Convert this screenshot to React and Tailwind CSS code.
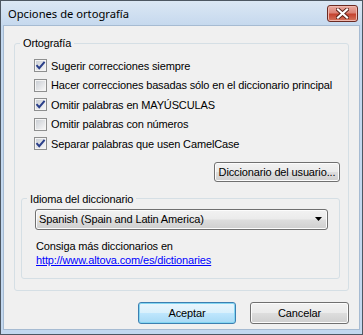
import React from "react";

const FONT = { fontFamily: '"Liberation Sans", Arial, sans-serif' };

function Check({ checked }) {
  return (
    <span className="relative flex h-[13px] w-[13px] shrink-0 items-center justify-center border border-[#8e8f8f] bg-[#f4f4f4]">
      <span className="block h-[9px] w-[9px] bg-gradient-to-br from-[#cbcfd5] to-[#f6f6f6]" />
      {checked && (
        <svg className="absolute left-0 top-0" width="11" height="11" viewBox="0 0 11 11">
          <path d="M1.5 5.2 L4.2 8.2 L9.6 1.8" fill="none" stroke="#2a3f8a" strokeWidth="2" strokeLinejoin="miter" />
        </svg>
      )}
    </span>
  );
}

function Row({ checked, children }) {
  return (
    <div className="flex h-[19.5px] items-center gap-[4px]">
      <Check checked={checked} />
      <span>{children}</span>
    </div>
  );
}

function VButton({ children, primary, className = "" }) {
  return (
    <div
      className={
        "flex items-center justify-center rounded-[3px] border " +
        (primary
          ? "border-[#3c7fb1] bg-[linear-gradient(#eaf6fd_0%,#d9f0fc_48%,#bee6fd_52%,#a7d9f5_100%)] shadow-[inset_0_0_0_1px_#84d6f2]"
          : "border-[#707070] bg-[linear-gradient(#f2f2f2_0%,#ebebeb_48%,#dddddd_52%,#cfcfcf_100%)] shadow-[inset_0_0_0_1px_#fcfcfc]") +
        " " +
        className
      }
    >
      {children}
    </div>
  );
}

export default function App() {
  return (
    <div className="h-[335px] w-[363px] text-[11px] leading-[14px] tracking-[-0.14px] text-black" style={FONT}>
      <div className="flex h-full w-full flex-col border border-[#4d5762] bg-[#c3d8ef]">
        <div className="flex h-[24px] shrink-0 items-center justify-between bg-[linear-gradient(#dbe7f4,#c6d9ee)] pl-[7px] pr-[4px]">
          <span className="mt-[2px] text-[11.2px] tracking-normal text-black" style={{ fontFamily: '"Noto Sans", "Open Sans", sans-serif' }}>
            Opciones de ortografía
          </span>
          <div className="mt-[1px] flex h-[17px] w-[31px] items-center justify-center rounded-[3px] border border-[#6b2a22] bg-[linear-gradient(#e9aaa0_0%,#dc8376_45%,#c5432f_55%,#d5755d_100%)] shadow-[inset_0_0_0_1px_#f0b8ae]">
            <svg width="13" height="11" viewBox="0 0 13 11">
              <path d="M2 1.5 L11 9.5 M11 1.5 L2 9.5" stroke="#5a2219" strokeWidth="4" strokeLinecap="square" />
              <path d="M2 1.5 L11 9.5 M11 1.5 L2 9.5" stroke="#ffffff" strokeWidth="2.2" strokeLinecap="square" />
            </svg>
          </div>
        </div>
        <div className="mx-[2px] mb-[4px] flex flex-1 flex-col border border-[#a6bbd2] bg-[#f0f0f0] px-[10px]">
          <fieldset className="mt-[10px] h-[255px] rounded-[3px] border border-[#d5dfe5] p-0">
            <legend className="ml-[5px] px-[3px] leading-[14px]">Ortografía</legend>
            <div className="flex flex-col pl-[19px] pt-[6px]">
              <Row checked>Sugerir correcciones siempre</Row>
              <Row>Hacer correcciones basadas sólo en el diccionario principal</Row>
              <Row checked>Omitir palabras en MAYÚSCULAS</Row>
              <Row>Omitir palabras con números</Row>
              <Row checked>Separar palabras que usen CamelCase</Row>
            </div>
            <div className="mt-[8px] flex justify-end pr-[8px]">
              <VButton className="h-[20px] w-[126px]">Diccionario del usuario...</VButton>
            </div>
            <fieldset className="ml-[6px] mt-[10px] h-[87px] w-[319px] rounded-[3px] border border-[#d5dfe5] p-0">
              <legend className="ml-[5px] px-[3px] leading-[14px]">Idioma del diccionario</legend>
              <div className="pl-[13px] pr-[11px] pt-[3px]">
                <div className="flex h-[21px] items-center justify-between rounded-[3px] border border-[#707070] bg-[linear-gradient(#f2f2f2_0%,#ebebeb_48%,#dddddd_52%,#cfcfcf_100%)] pl-[3px] pr-[5px] shadow-[inset_0_0_0_1px_#fcfcfc]">
                  <span>Spanish (Spain and Latin America)</span>
                  <svg width="7" height="4" viewBox="0 0 7 4">
                    <path d="M0 0 H7 L3.5 4 Z" fill="#000" />
                  </svg>
                </div>
                <div className="mt-[9px] pl-[1px]">
                  <div>Consiga más diccionarios en</div>
                  <div className="text-[#0000ff] underline">http://www.altova.com/es/dictionaries</div>
                </div>
              </div>
            </fieldset>
          </fieldset>
          <div className="mt-[11px] flex justify-end gap-[14px]">
            <VButton primary className="h-[22px] w-[98px]">Aceptar</VButton>
            <VButton className="h-[22px] w-[99px]">Cancelar</VButton>
          </div>
        </div>
      </div>
    </div>
  );
}
